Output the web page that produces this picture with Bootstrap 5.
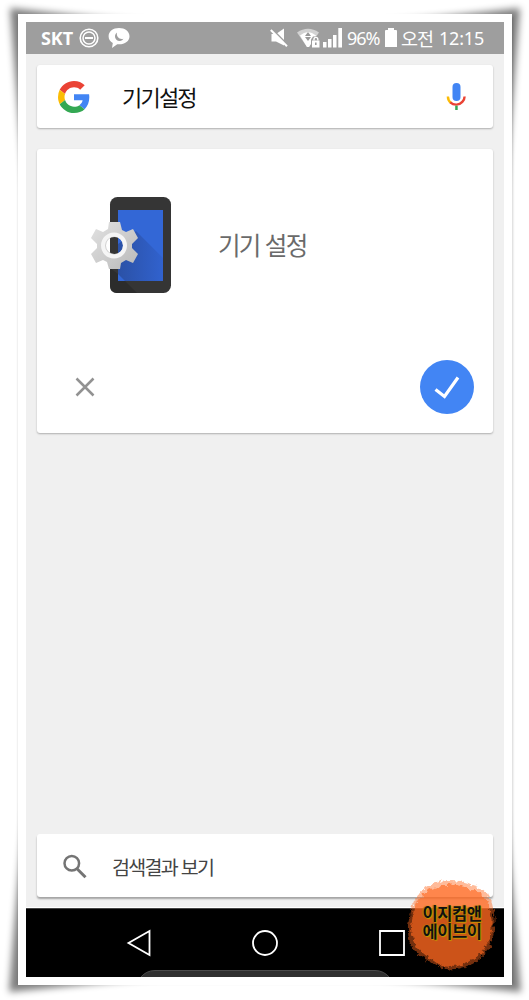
<!DOCTYPE html>
<html lang="ko">
<head>
<meta charset="utf-8">
<meta name="viewport" content="width=device-width, initial-scale=1">
<title>기기설정</title>
<link href="https://cdn.jsdelivr.net/npm/bootstrap@5.3.0/dist/css/bootstrap.min.css" rel="stylesheet">
<style>
body{width:529px;height:1000px;margin:0;overflow:hidden;background:#fff;font-family:"Noto Sans CJK KR","Noto Sans",sans-serif}
svg{display:block;flex:none}
.backdrop{left:0;top:0}
.photo{width:494px;height:971px;margin:14px 0 0 18px;padding:8px;background:#fff}
.screen{width:478px;height:955px;background:#f0f0f0}
.status{height:32px;background:#9e9e9e;color:#fff;padding-left:15px;line-height:32px;white-space:nowrap}
.carrier{font:700 18px/32px "Noto Sans",sans-serif;width:38px;letter-spacing:-.1px}
.latin{font:400 18px/34px "Noto Sans",sans-serif}
.panel{border:0;border-radius:3px;background:#fff;margin:0 11px;box-shadow:0 1px 2px rgba(0,0,0,.28)}
.query{font-size:22px;letter-spacing:-1.8px;color:#111;line-height:32px;padding-bottom:1px}
.answer{font-size:24.5px;letter-spacing:-1.7px;color:#6a6a6a;line-height:36px}
.results{font-size:19.5px;letter-spacing:-1.7px;color:#444;line-height:28px}
.confirm{width:54px;height:54px;background:#4285f4}
.navkeys{height:69px;background:#000}
.stamp{left:404px;top:876px}
.stamp-text{left:410px;top:905px;width:84px;font-weight:700;font-size:16.5px;line-height:17.5px;letter-spacing:-.4px;color:#111;text-shadow:0 0 1px #c49a00,1px 1px 1px #c49a00,-1px 0 1px #b08000}
</style>
<script src="https://cdn.jsdelivr.net/npm/bootstrap@5.3.0/dist/js/bootstrap.bundle.min.js"></script>
</head>
<body class="position-relative">
<svg class="backdrop position-absolute" width="529" height="1000">
  <defs>
    <filter id="soft" x="-5%" y="-5%" width="110%" height="110%" color-interpolation-filters="sRGB"><feGaussianBlur stdDeviation="3.8"/></filter>
    <filter id="edge"><feGaussianBlur stdDeviation="1.2"/></filter>
  </defs>
  <path d="M18 17H513V984H18Z" fill="#000" opacity=".17" filter="url(#edge)"/>
  <path d="M10 8Q90 17 180 25H350Q440 17 520 8Q513 100 503 210V790Q514 900 521 992Q440 984 350 975H180Q90 984 9 992Q16 900 27 790V210Q17 100 10 8Z" fill="#000" opacity=".5" filter="url(#soft)"/>
</svg>
<main class="photo position-relative">
  <div class="screen d-flex flex-column overflow-hidden">
    <header class="status d-flex align-items-center">
      <span class="carrier">SKT</span>
      <svg width="20" height="20" viewBox="0 0 20 20" fill="none" stroke="#fff"><circle cx="10" cy="10" r="8.8" stroke-width="1.6"/><circle cx="10" cy="10" r="6" stroke-width="1.5"/><path d="M6 10h8" stroke-width="2"/></svg>
      <svg style="margin-left:9px" width="22" height="22" viewBox="0 0 22 22"><path fill="#fff" d="M11 1C5 1 .6 4.500.6 9.200c0 3 1.600 5.400 4.200 6.800L4 21l5.200-3.800c7 .7 12.300-2.700 12.300-8C21.500 4.500 17 1 11 1"/><path fill="#9e9e9e" d="M9 5.500A4.600 4.600 0 1 0 15.500 11.700C11.500 13 8 9.500 9 5.500"/></svg>
      <svg style="margin-left:140px" width="18" height="20" viewBox="0 0 18 20"><path d="M1.500 6h4.500L14 .5v17L6 13.500H1.500z" fill="#fff"/><path d="M1.500 .8 18 17.300" stroke="#9e9e9e" stroke-width="2"/><path d="M.8 2 17 18.200" stroke="#fff" stroke-width="2"/></svg>
      <svg style="margin-left:9px" width="23" height="20" viewBox="0 0 23 20"><path d="M0 4.500Q11 -3 22 4.500L12 19h-2z" fill="#d2d2d2"/><path d="M3 7.500Q11 .5 19 7.500L12 19h-2z" fill="#fff"/><path d="m11 4 3 4H8zm0 9 3-4H8z" fill="#999"/><path d="M14 11.500l2-3h5l2 3v8.500h-9z" fill="#9e9e9e"/><path d="M17 12.500v-1.200a1.900 1.900 0 0 1 3.800 0v1.200" fill="none" stroke="#fff" stroke-width="1.400"/><path d="M15 12.500h7.500v7H15z" fill="#fff"/><path d="M18 14.500h1.600v2.500H18z" fill="#999"/></svg>
      <svg style="margin-left:3px" width="20" height="20" viewBox="0 0 20 20" fill="#fff"><path d="M0 14h3.500v5.500H0zM5 11h3.500v8.500H5zM10 7h3.500v12.500H10zM15.300 0H19v19.500h-3.700z"/></svg>
      <span class="latin" style="margin-left:4px;width:38px;letter-spacing:-1.1px">96%</span>
      <svg width="12" height="20" viewBox="0 0 12 20"><path d="M3 0h6v2h2q1 0 1 1v16H0V3q0-1 1-1h2z" fill="#fff"/></svg>
      <span style="margin-left:4px;width:38px;font-size:18.500px;letter-spacing:-1px">오전</span>
      <span class="latin" style="letter-spacing:-.2px">12:15</span>
    </header>

    <section class="panel card flex-row align-items-center" style="height:63px;margin-top:11px;padding-left:21px;padding-right:26px">
      <svg width="32" height="32" viewBox="0 0 48 48"><path fill="#EA4335" d="M24 9.500c3.540 0 6.710 1.220 9.210 3.600l6.850-6.850C35.900 2.380 30.470 0 24 0 14.620 0 6.510 5.380 2.560 13.220l7.980 6.190C12.430 13.720 17.740 9.500 24 9.500z"/><path fill="#4285F4" d="M46.980 24.550c0-1.570-.15-3.090-.38-4.550H24v9.020h12.940c-.58 2.960-2.260 5.480-4.780 7.180l7.730 6c4.510-4.180 7.090-10.360 7.090-17.650z"/><path fill="#FBBC05" d="M10.530 28.590A14.500 14.500 0 0 1 9.770 24c0-1.600.27-3.140.76-4.590l-7.980-6.190A23.900 23.900 0 0 0 0 24c0 3.870.92 7.540 2.560 10.780l7.970-6.190z"/><path fill="#34A853" d="M24 48c6.480 0 11.930-2.130 15.890-5.810l-7.730-6c-2.150 1.450-4.920 2.300-8.160 2.300-6.260 0-11.570-4.220-13.470-9.910l-7.980 6.190C6.510 42.620 14.620 48 24 48z"/></svg>
      <span class="query" style="margin-left:32px">기기설정</span>
      <svg class="ms-auto" width="21" height="28" viewBox="0 0 21 28"><rect x="6.500" y="0" width="8" height="18" rx="4" fill="#4285f4"/><path d="M1.900 13.500c0 3 1.200 5 3.200 6.400" stroke="#fbbc05" stroke-width="2.400" fill="none"/><path d="M4.300 19.300c3.500 3.300 9 3 12-.4 1.400-1.500 2.300-3.300 2.300-5.400" stroke="#ea4335" stroke-width="2.400" fill="none"/><path d="M9.200 22.700h2.500V27H9.200z" fill="#34a853"/></svg>
    </section>

    <section class="panel card" style="height:284px;margin-top:21px">
      <div class="d-flex align-items-center" style="padding:44px 0 0 48px;height:148px">
        <svg width="90" height="106" viewBox="85 192 90 106">
          <defs><linearGradient id="metal" x1="0" y1="0" x2="1" y2="1"><stop stop-color="#e2e2e2"/><stop offset="1" stop-color="#b9b9b9"/></linearGradient>
          <linearGradient id="shade" x1="0" y1="0" x2="1" y2="0"><stop stop-color="#2b51a6"/><stop offset="1" stop-color="#3162ce"/></linearGradient></defs>
          <rect x="110" y="197" width="61" height="96" rx="7.500" fill="#353535"/>
          <path d="M118 210h45v71h-45z" fill="#3367d6"/><path d="M136 231l27 27v23h-38l-7-7v-30z" fill="url(#shade)"/>
          <path d="M110 268l8 6v7h7l12 12h-20q-7 0-7-7z" fill="#2c2c2c"/>
          <path fill="url(#metal)" fill-rule="evenodd" d="M109 222h11l2 8 4 2 7-3 5 9-6 6v4l6 6-5 9-7-3-5 3-1 6h-11l-2-7-4-2-7 3-5-9 6-6v-4l-6-6 5-9 7 3 5-3zM106 245.500a8.500 8.500 0 1 0 17 0a8.500 8.500 0 1 0-17 0z"/>
          <circle cx="114" cy="245.500" r="11" fill="none" stroke="#f5f5f5" stroke-width="4"/>
        </svg>
        <span class="answer" style="margin-left:43px">기기 설정</span>
      </div>
      <div class="d-flex align-items-center justify-content-between" style="margin:63px 19px 0 38px;height:54px">
        <svg width="20" height="20" viewBox="0 0 20 20"><path d="m1.500 1.500 17 17M18.500 1.500l-17 17" stroke="#929292" stroke-width="2.500"/></svg>
        <div class="confirm rounded-circle"><svg width="54" height="54" viewBox="0 0 54 54"><path d="m15.500 29.500 9 7L38 17.500" fill="none" stroke="#fff" stroke-width="3.200"/></svg></div>
      </div>
    </section>

    <section class="panel card flex-row align-items-center mt-auto" style="height:63px;margin-bottom:10px;padding:2px 0 0 25px;box-shadow:0 2px 2px rgba(0,0,0,.32)">
      <svg width="26" height="26" viewBox="0 0 26 26" fill="none" stroke="#747474"><circle cx="9.800" cy="9.300" r="7.300" stroke-width="2.500"/><path d="m15 14.800 8.500 8.500" stroke-width="3"/></svg>
      <span class="results" style="margin-left:24px">검색결과 보기</span>
    </section>
    <div style="height:1px;background:#fff"></div>
    <footer class="navkeys">
      <svg width="478" height="69" viewBox="26 908 478 69" fill="none" stroke="#fff" stroke-width="1.800"><path d="M26 908.500h478" stroke="#444" stroke-width="1"/><path d="M149.500 931v24L128.500 943z"/><circle cx="265" cy="943" r="12"/><path d="M380 931h24v24h-24z"/><path d="M140 978q6-7.500 15-7.500h220q9 0 15 7.500z" fill="#303030" stroke="#4b4b4b" stroke-width="1"/></svg>
    </footer>
  </div>
</main>
<svg class="stamp position-absolute" width="96" height="98" viewBox="404 876 96 98">
  <defs><filter id="rough" x="-10%" y="-10%" width="120%" height="120%" color-interpolation-filters="sRGB"><feTurbulence type="fractalNoise" baseFrequency=".22" numOctaves="3" seed="4"/><feDisplacementMap in="SourceGraphic" scale="7" xChannelSelector="R" yChannelSelector="G"/></filter></defs>
  <g filter="url(#rough)"><path d="M411 912Q415 890 435 883Q452 876 472 885Q490 889 493 907Q498 928 489 948Q481 963 464 967Q445 974 429 961Q406 951 408 925Z" fill="#ff6820" opacity=".45"/><path d="M413 914Q416 892 438 887Q451 881 470 889Q487 895 490 910Q495 929 486 946Q477 961 461 965Q446 971 431 959Q410 947 411 925Z" fill="#ff6820" opacity=".64"/></g>
</svg>
<div class="stamp-text position-absolute text-center">이지컴앤<br>에이브이</div>
</body>
</html>
